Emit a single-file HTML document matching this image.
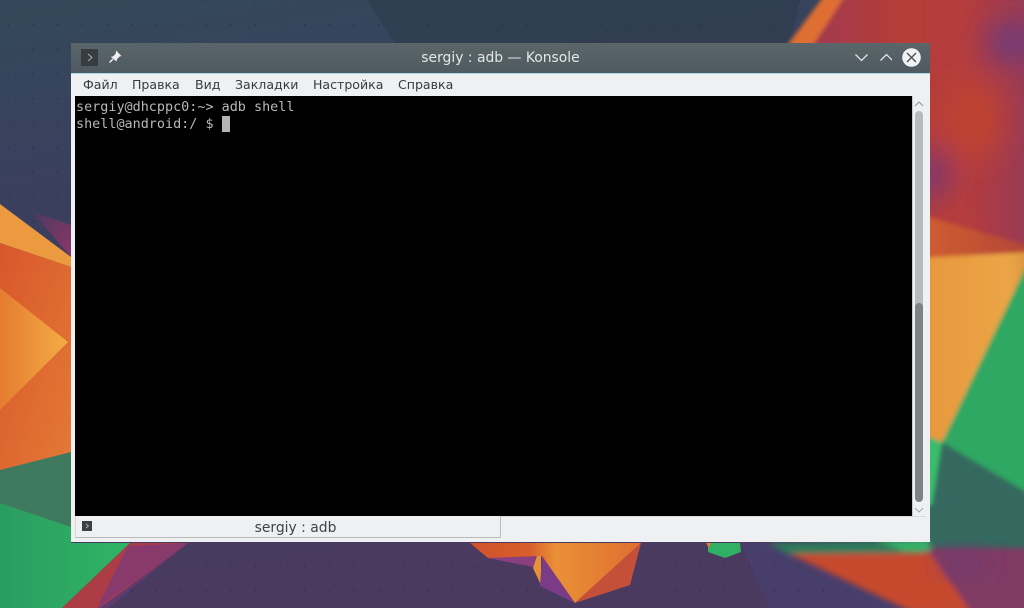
<!DOCTYPE html>
<html><head><meta charset="utf-8"><style>
html,body{margin:0;padding:0;width:1024px;height:608px;overflow:hidden;background:#3a4058}
.a{position:absolute;white-space:nowrap}
#bg{position:absolute;left:0;top:0}
.m{top:77px;font:12.55px/16px "DejaVu Sans",sans-serif;color:#363b40}
.t{font:13.45px/17px "DejaVu Sans Mono",monospace;color:#b8b8b8;left:76px}
</style></head><body>
<svg id="bg" width="1024" height="608" viewBox="0 0 1024 608">
<defs>
<linearGradient id="base" x1="0" y1="0" x2="0.25" y2="1"><stop offset="0" stop-color="#33495a"/><stop offset=".3" stop-color="#3a3f5e"/><stop offset="1" stop-color="#4b3a60"/></linearGradient>
<linearGradient id="or2" x1="0" y1="0" x2="1" y2="1"><stop offset="0" stop-color="#d8572c"/><stop offset="1" stop-color="#e47a35"/></linearGradient>
<linearGradient id="or3" x1="0" y1="0" x2="1" y2="0"><stop offset="0" stop-color="#e57c30"/><stop offset="1" stop-color="#f3ad45"/></linearGradient>
<linearGradient id="or4" x1="0" y1="0" x2="1" y2="0"><stop offset="0" stop-color="#e8963e"/><stop offset=".8" stop-color="#eaa545"/><stop offset="1" stop-color="#d89040"/></linearGradient>
<linearGradient id="orb" x1="0" y1="0" x2="1" y2="0"><stop offset="0" stop-color="#d0502c"/><stop offset=".35" stop-color="#d85f2c"/><stop offset=".5" stop-color="#ea9036"/><stop offset="1" stop-color="#de6e30"/></linearGradient>
<linearGradient id="gr" x1="0" y1="0" x2="1" y2="0"><stop offset="0" stop-color="#2a9d60"/><stop offset="1" stop-color="#2fb466"/></linearGradient>
<linearGradient id="tr" x1="0" y1="0" x2="1" y2="0"><stop offset="0" stop-color="#9a3a55"/><stop offset=".45" stop-color="#b63c38"/><stop offset=".7" stop-color="#b53c3c"/><stop offset="1" stop-color="#93395a"/></linearGradient>
<linearGradient id="band" x1="0" y1="0" x2="1" y2="0"><stop offset="0" stop-color="#d25f30"/><stop offset="1" stop-color="#b04438"/></linearGradient>
<linearGradient id="mag" x1="0" y1="0" x2="1" y2="1"><stop offset="0" stop-color="#4a3a60"/><stop offset="1" stop-color="#8c3668"/></linearGradient>
<filter id="b2" x="-20%" y="-20%" width="140%" height="140%"><feGaussianBlur stdDeviation="2"/></filter>
<filter id="b3" x="-20%" y="-20%" width="140%" height="140%"><feGaussianBlur stdDeviation="3"/></filter>
<filter id="b8" x="-60%" y="-60%" width="220%" height="220%"><feGaussianBlur stdDeviation="14"/></filter>
<pattern id="dots" x="21" y="-0.5" width="24.7" height="24.6" patternUnits="userSpaceOnUse"><circle cx="12" cy="0.5" r=".8" fill="#222a3a" opacity=".75"/></pattern>
</defs>
<rect width="1024" height="608" fill="url(#base)"/>
<polygon points="367,0 800,0 790,43 395,43" fill="#2f3c4e" opacity=".75"/>
<polygon points="740,543 767,543 905,608 770,608" fill="#483e6c"/>
<rect width="1024" height="608" fill="url(#dots)"/>

<!-- right side -->
<g filter="url(#b2)">
<polygon points="830,-12 1040,-12 1040,270 900,270 900,60 789,60" fill="url(#tr)"/>
<polygon points="830,-12 850,-12 812,47 786,47" fill="#df6e30"/>
</g>
<g filter="url(#b8)">
<ellipse cx="1012" cy="42" rx="26" ry="20" fill="#703a78"/>
<ellipse cx="930" cy="175" rx="22" ry="28" fill="#84396a"/>
<ellipse cx="975" cy="120" rx="28" ry="40" fill="#bf4230"/>
</g>
<g filter="url(#b2)">
<polygon points="915,213 1040,249 1040,270 915,270" fill="url(#band)"/>
<rect x="915" y="262" width="125" height="290" fill="#2fa862"/>
<polygon points="915,445 942,442 1040,500 1040,552 915,552" fill="#34695f"/>
<polygon points="915,436 942,442 932,505 915,505" fill="#3bbc6e"/>
<polygon points="915,258 1033,252 942,442 915,432" fill="url(#or4)"/>
</g>
<g filter="url(#b3)">
<polygon points="767,543 930,540 930,554 790,555" fill="#2f7a5c"/>
<rect x="925" y="548" width="115" height="64" fill="#803a64"/>
<polygon points="790,554 930,553 971,612 912,612" fill="#c6482e"/>
<polygon points="875,540 930,540 930,551 905,551" fill="#35b268"/>
</g>
<ellipse cx="965" cy="562" rx="22" ry="10" fill="#6c3a74" filter="url(#b8)"/>
<polygon points="708,543 740,543 741,552 725,558 708,552" fill="#2fb064"/>
<polygon points="706,543 711,543 709,548" fill="#e07a30"/>

<!-- left side -->
<polygon points="32,212 71,225 71,257" fill="url(#mag)"/>
<polygon points="0,204 71,257 71,267 0,243" fill="#eb9a3f"/>
<polygon points="0,243 71,267 71,460 0,480" fill="url(#or2)"/>
<polygon points="0,288 68,342 0,410" fill="url(#or3)"/>
<polygon points="0,470 71,452 71,530 0,503" fill="#3f7a5f"/>
<polygon points="0,503 71,527 71,543 130,543 62,608 0,608" fill="url(#gr)"/>
<polygon points="130,543 188,543 100,608 62,608" fill="#ac3c46"/>
<polygon points="128,546 188,543 108,600 97,608" fill="#853a70" opacity=".9"/>
<polygon points="188,543 110,600 97,608 108,608" fill="#6f3a7a" opacity=".6"/>

<!-- bottom center -->
<polygon points="488,558 542,556 538,568" fill="#8a3f80"/>
<polygon points="537,556 541,556 541,585 533,568" fill="#e89238"/>
<polygon points="542,556 575,603 540,586" fill="#7a3c86"/>
<polygon points="470,543 641,543 575,603 542,556 488,558" fill="url(#orb)"/>
<polygon points="641,543 630,585 575,603" fill="#c5503a"/>
</svg>

<!-- window -->
<div class="a" style="left:71px;top:43px;width:859px;height:30px;background:linear-gradient(#5a666a,#4f5a60)"></div>
<div class="a" style="left:71px;top:73px;width:859px;height:1px;background:#a8dbe9"></div>
<div class="a" style="left:71px;top:74px;width:859px;height:468px;background:#eff0f1"></div>

<!-- titlebar icons -->
<div class="a" style="left:81px;top:49px;width:17px;height:17px;background:#363c3f"></div>
<svg class="a" style="left:81px;top:49px" width="17" height="17"><path d="M7 5l4 3.500-4 3.500" fill="none" stroke="#aab0b2" stroke-width="1"/></svg>
<svg class="a" style="left:108px;top:50px" width="14" height="14" viewBox="0 0 14 14"><path d="M8 .5l5.500 5.500-2 .6-2.600 2.600-.4 2.300L2.800 6.800l2.300-.4L7.700 3.800z" fill="#f0f1f2"/><path d="M5 9l-3.500 3.500" stroke="#f0f1f2" stroke-width="1.300"/></svg>
<div class="a" style="left:71px;top:49px;width:859px;text-align:center;font:13.9px/19px 'DejaVu Sans',sans-serif;color:#e4e6e7">sergiy : adb — Konsole</div>
<svg class="a" style="left:852px;top:50px" width="40" height="16" fill="none" stroke="#e2e5e6" stroke-width="1.300"><path d="M3.500 4.500l6 6 6-6"/><path d="M28.500 10.500l6-6 6 6"/></svg>
<svg class="a" style="left:902px;top:48px" width="20" height="20"><circle cx="9.500" cy="9.500" r="9.300" fill="#f1f2f3"/><path d="M5 5l9 9M14 5l-9 9" stroke="#4a5357" stroke-width="1.400"/></svg>

<!-- menu -->
<div class="a m" style="left:83px">Файл</div>
<div class="a m" style="left:132px">Правка</div>
<div class="a m" style="left:195px">Вид</div>
<div class="a m" style="left:235px">Закладки</div>
<div class="a m" style="left:313px">Настройка</div>
<div class="a m" style="left:398px">Справка</div>

<!-- terminal -->
<div class="a" style="left:75px;top:96px;width:837px;height:420px;background:#000"></div>
<div class="a t" style="top:99px">sergiy@dhcppc0:~&gt; adb shell</div>
<div class="a t" style="top:116px">shell@android:/ $</div>
<div class="a" style="left:222px;top:116px;width:8px;height:16px;background:#b4b4b4"></div>

<!-- scrollbar -->
<div class="a" style="left:912px;top:96px;width:1px;height:420px;background:#c8cacb"></div>
<div class="a" style="left:915px;top:111px;width:8px;height:200px;background:#b9babb;border-radius:4px 4px 0 0"></div>
<div class="a" style="left:915px;top:303px;width:8px;height:199px;background:#7f8284;border-radius:4px"></div>
<svg class="a" style="left:914px;top:100px" width="10" height="8" fill="none" stroke="#8f9496" stroke-width="1"><path d="M1 6l4-4 4 4"/></svg>
<svg class="a" style="left:914px;top:506px" width="10" height="8" fill="none" stroke="#a5a9ab" stroke-width="1"><path d="M1 2l4 4 4-4"/></svg>

<!-- tab bar -->
<div class="a" style="left:500px;top:516px;width:426px;height:1px;background:#d6d8d9"></div>
<div class="a" style="left:75px;top:516px;width:424px;height:21px;background:#eff0f1;border-right:1px solid #b9bbbc;border-bottom:1px solid #b9bbbc;border-left:1px solid #d5d7d8"></div>
<div class="a" style="left:82px;top:521px;width:10px;height:10px;background:#3a4043"></div>
<svg class="a" style="left:82px;top:521px" width="10" height="10"><path d="M4 3l2.500 2-2.500 2" fill="none" stroke="#b0b5b7" stroke-width=".9"/></svg>
<div class="a" style="left:76px;top:519px;width:439px;text-align:center;font:13.9px/18px 'DejaVu Sans',sans-serif;color:#3f4448">sergiy : adb</div>
</body></html>
